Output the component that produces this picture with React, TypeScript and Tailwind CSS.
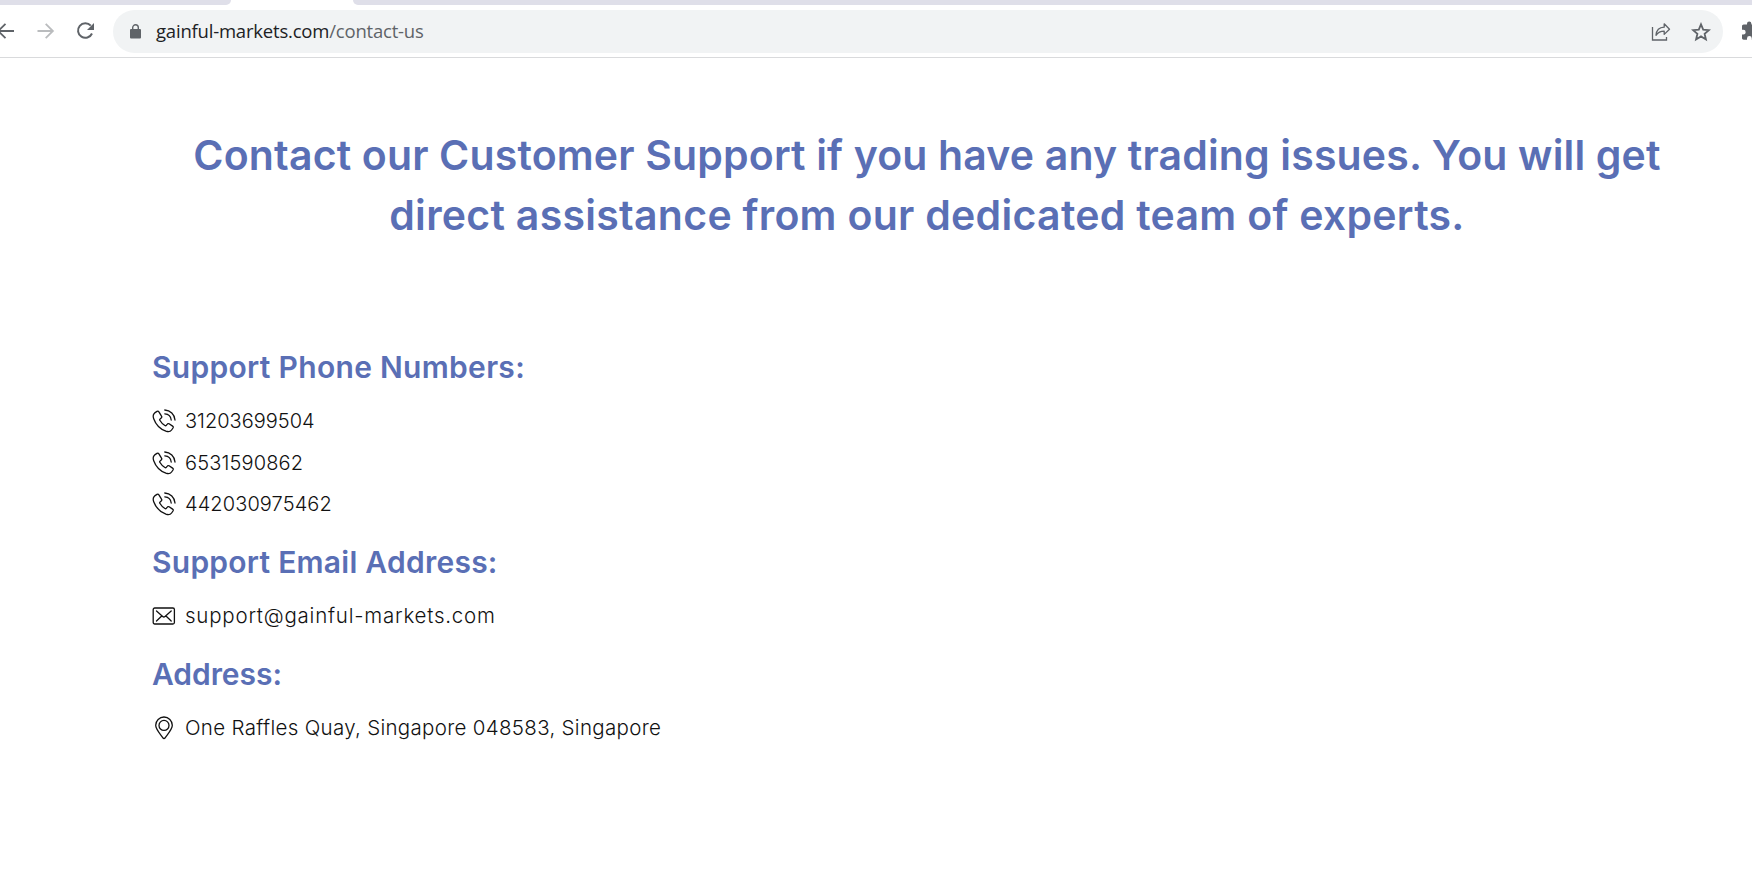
import type { ReactNode } from 'react';
import { clsx } from 'clsx';

interface ContactItemProps {
  icon: ReactNode;
  text: string;
  className?: string;
}

interface ContactSectionProps {
  title: string;
  titleClassName?: string;
  children: ReactNode;
}

const phoneNumbers = [
  { value: '31203699504', className: 'text-[20px] tracking-[0px]' },
  { value: '6531590862', className: 'text-[20px] tracking-[0.15px]' },
  { value: '442030975462', className: 'text-[20px] tracking-[0.1px]' },
];

const PhoneIcon = () => (
  <svg
    className="size-6"
    viewBox="0 0 24 24"
    fill="none"
    stroke="currentColor"
    strokeWidth="1.3"
    strokeLinecap="round"
    strokeLinejoin="round"
  >
    <path d="M5 2.4 2.7 3.9C1.1 5.1.9 7.4 1.7 9.7c1.9 5.3 6.4 10.3 12.2 12.5 2.3.8 4.5.5 5.7-1.2l1.4-2c.4-.7.2-1.5-.4-1.900l-3.500-2.300c-.6-.4-1.400-.3-1.800.3l-1 1.200c-.4.5-.9.5-1.400.2-2-1.200-3.900-3.100-5.100-5.200-.3-.5-.2-1 .3-1.400l1.100-.9c.6-.5.7-1.200.3-1.800L6.900 2.800c-.4-.6-1.300-.8-1.900-.4Z" />
    <path d="M12.8 1C18.3 1.3 22.6 5.5 23 11" />
    <path d="M12.8 4.8C16.3 5 18.9 7.5 19.2 11" />
  </svg>
);

const MailIcon = () => (
  <svg
    className="size-6"
    viewBox="0 0 24 24"
    fill="none"
    stroke="currentColor"
    strokeWidth="1.3"
    strokeLinecap="round"
    strokeLinejoin="round"
  >
    <rect x="1.2" y="4" width="21.2" height="16" rx="1.5" />
    <path d="m4.500 7 6.200 5.500c.6.6 1.600.6 2.300 0L19.200 7M4.500 17l4.700-4.500M19.200 17l-4.700-4.500" />
  </svg>
);

const PinIcon = () => (
  <svg className="size-6" viewBox="0 0 24 24" fill="none" stroke="currentColor" strokeWidth="1.3">
    <path
      d="M12 22.500c-.4 0-.8-.2-1.100-.7C8.600 18.500 3.700 13.400 3.700 9.300a8.300 8.300 0 0 1 16.600 0c0 4.100-4.900 9.200-7.200 12.500-.3.500-.7.700-1.100.7Z"
      strokeLinejoin="round"
    />
    <circle cx="12" cy="9.400" r="5" />
  </svg>
);

const BrowserBar = () => (
  <header className="h-[58px] overflow-hidden border-b border-[#d9dadc] bg-white">
    <div className="flex h-[5px] justify-between">
      <div className="w-[231px] rounded-br-[6px] bg-[#dfdfe9]" />
      <div className="w-[1399px] rounded-bl-[6px] bg-[#dfdfe9]" />
    </div>
    <div className="flex h-[53px] items-start pt-[5px]">
      <div className="flex h-[41px] w-[113px] shrink-0 items-center text-[#5f6368]">
        <svg className="h-5 w-[14px] shrink-0" viewBox="0 0 14 20" fill="none" stroke="currentColor" strokeWidth="1.8">
          <path d="M14 10H-1M5.500 2.800-1.700 10l7.200 7.200" />
        </svg>
        <svg className="ml-[22px] size-5 shrink-0 text-[#babcbe]" viewBox="0 0 20 20" fill="none" stroke="currentColor" strokeWidth="1.8">
          <path d="M1.500 10H17M9.700 2.800l7.200 7.200-7.200 7.200" />
        </svg>
        <svg className="ml-[19px] size-5 shrink-0" viewBox="0 0 20 20" fill="none" stroke="currentColor" strokeWidth="2">
          <path d="M15.800 4.700A7.300 7.300 0 1 0 17 12.500" />
          <path d="M19 2v7h-7Z" fill="currentColor" stroke="none" />
        </svg>
      </div>
      <div className="flex h-[43px] w-[1610px] shrink-0 items-center rounded-full bg-[#f1f3f4] pl-[17px] pr-[12px]">
        <svg className="h-[15px] w-[11px] shrink-0 text-[#5f6368]" viewBox="0 0 11 15">
          <rect x="0" y="5" width="11" height="9.500" rx="1" fill="currentColor" />
          <path d="M2.700 5.500V3.600a2.800 2.800 0 0 1 5.600 0v1.900" fill="none" stroke="currentColor" strokeWidth="1.4" />
        </svg>
        <p className="mb-[2px] ml-[15px] flex-1 whitespace-nowrap font-['Open_Sans','Noto_Sans',sans-serif] text-[18.5px] tracking-[-0.2px] text-[#5f6368]">
          <span className="text-[#202124]">gainful-markets.com</span>/contact-us
        </p>
        <svg className="size-5 text-[#5f6368]" viewBox="0 0 20 20" fill="none" stroke="currentColor" strokeWidth="1.3">
          <path d="M1.500 5v13h14v-3" />
          <path d="M5 13.300c.4-5.200 3.200-7.900 8.200-8.100V1.800l5.300 5.400-5.300 5.200V9.200c-3.700 0-6.200 1.200-8.200 4.100Z" strokeLinejoin="round" />
        </svg>
        <svg className="ml-[20px] size-5 text-[#5f6368]" viewBox="0 0 20 20" fill="none" stroke="currentColor" strokeWidth="1.8">
          <path d="m10 2.300 2.200 5.300 5.700.5-4.300 3.700 1.300 5.600L10 14.400l-4.900 3 1.300-5.600-4.300-3.700 5.700-.5Z" />
        </svg>
      </div>
      <svg className="ml-[18px] mt-[11px] size-5 shrink-0 text-[#5f6368]" viewBox="0 0 20 20" fill="currentColor">
        <path d="M17 9.500h-1.300V5.300c0-1-.8-1.700-1.700-1.700h-3.600V2.700a2.200 2.200 0 0 0-4.400 0v.9H2.700C1.700 3.600 1 4.400 1 5.300v3.500h1.300a2.400 2.400 0 0 1 0 4.800H1V17c0 1 .8 1.700 1.700 1.700H6v-1.300a2.400 2.400 0 0 1 4.800 0v1.300H14c1 0 1.700-.8 1.700-1.700v-3.300H17a2.100 2.100 0 0 0 0-4.200Z" />
      </svg>
    </div>
  </header>
);

function ContactItem({ icon, text, className }: Readonly<ContactItemProps>) {
  return (
    <li className="flex h-[41.5px] items-start gap-[9px] text-[#111]">
      <span className="mt-[3px]">{icon}</span>
      <span className={clsx('whitespace-nowrap leading-[30px] font-light', className)}>{text}</span>
    </li>
  );
}

function ContactSection({ title, titleClassName, children }: Readonly<ContactSectionProps>) {
  return (
    <section>
      <h2
        className={clsx(
          'mb-[16px] w-fit whitespace-nowrap text-[30px] leading-[45px] font-semibold text-[#5a6fb5]',
          titleClassName
        )}
      >
        {title}
      </h2>
      <ul className="mb-[9.25px]">{children}</ul>
    </section>
  );
}

export default function App() {
  return (
    <div className="h-[895px] overflow-hidden bg-white font-['Inter',sans-serif]">
      <BrowserBar />
      <main className="pt-[67px] pl-[152px]">
        <h1 className="flex w-[1550px] flex-col items-center whitespace-nowrap text-[41px] leading-[60px] font-semibold text-[#5a6fb5]">
          <span className="tracking-[0.16px]">
            Contact our Customer Support if you have any trading issues. You will get
          </span>
          <span className="tracking-[0.28px]">direct assistance from our dedicated team of experts.</span>
        </h1>
        <div className="pt-[100px]">
          <ContactSection title="Support Phone Numbers:" titleClassName="tracking-[0.3px]">
            {phoneNumbers.map((phone) => (
              <ContactItem key={phone.value} icon={<PhoneIcon />} text={phone.value} className={phone.className} />
            ))}
          </ContactSection>
          <ContactSection title="Support Email Address:" titleClassName="tracking-[0.25px]">
            <ContactItem
              icon={<MailIcon />}
              text="support@gainful-markets.com"
              className="text-[20.5px] tracking-[0.78px]"
            />
          </ContactSection>
          <ContactSection title="Address:" titleClassName="tracking-[-0.05px]">
            <ContactItem
              icon={<PinIcon />}
              text="One Raffles Quay, Singapore 048583, Singapore"
              className="text-[20.5px] tracking-[0.31px]"
            />
          </ContactSection>
        </div>
      </main>
    </div>
  );
}
